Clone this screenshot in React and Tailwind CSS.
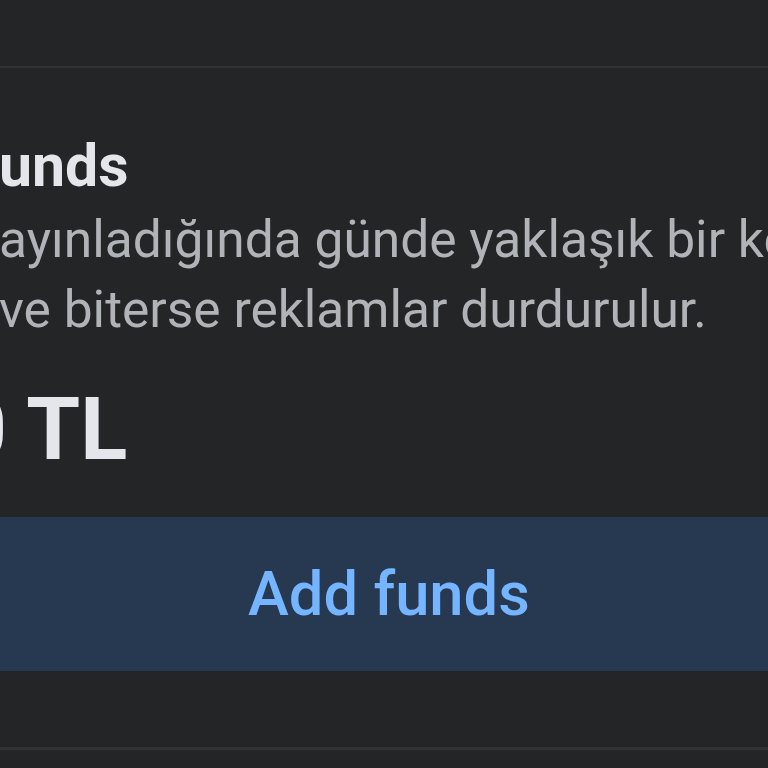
export default function App() {
  return (
    <div className="h-[768px] w-[768px] overflow-hidden bg-[#242526] font-['Roboto','Noto_Sans',sans-serif]">
      <div className="h-[66px]" />
      <div className="h-[2px] bg-[#313233]" />

      <section className="pt-[64px]">
        <h2 className="-ml-[1px] whitespace-nowrap text-[59px] font-bold leading-[68px] text-[#e4e6eb]">
          unds
        </h2>
        <p className="mt-[5px] -ml-[1px] whitespace-nowrap text-[51.5px] leading-[70px] text-[#b0b3b8]">
          ayınladığında günde yaklaşık bir kez
          <br />
          ve biterse reklamlar durdurulur.
        </p>
        <div className="mt-[34px] -ml-[43px] whitespace-nowrap text-[87px] font-bold leading-[100px] text-[#e4e6eb]">
          0 TL
        </div>

        <button className="mt-[38px] flex h-[154px] w-full items-center justify-center bg-[#263951] pl-[10px] text-[61.5px] font-medium text-[#75b5ff]">
          Add funds
        </button>
      </section>

      <div className="h-[76px]" />
      <div className="h-[3px] bg-[#313233]" />
    </div>
  );
}
